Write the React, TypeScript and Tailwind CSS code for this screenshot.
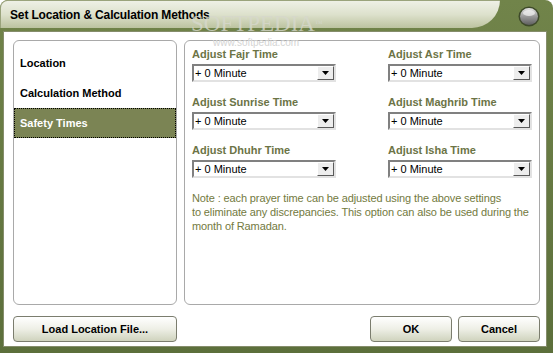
import React from "react";

function Select() {
  return (
    <div className="flex h-[18px] w-[144px] border-2 border-t-[#808080] border-l-[#808080] border-b-[#e2e2e2] border-r-[#e2e2e2] bg-white">
      <span className="flex-1 pl-[1px] text-[11px] leading-[14px] text-black">+ 0 Minute</span>
      <span className="flex w-[17px] items-center justify-center border border-t-white border-l-white border-b-[#5a5a5a] border-r-[#5a5a5a] bg-[#ededed]">
        <svg width="7" height="4" viewBox="0 0 7 4">
          <path d="M0 0h7L3.5 4z" fill="#000" />
        </svg>
      </span>
    </div>
  );
}

function Field({ label }: { label: string }) {
  return (
    <div className="flex flex-col">
      <div className="h-[14px] text-[11px] font-bold leading-[14px] text-[#6c7446]">{label}</div>
      <div className="mt-[3px]">
        <Select />
      </div>
    </div>
  );
}

function Btn({ children, w }: { children: React.ReactNode; w: string }) {
  return (
    <button
      className={`${w} h-[26px] shrink-0 rounded-[4px] border border-[#7b7d6e] bg-gradient-to-b from-white via-[#eeefe6] to-[#cfd3bd] text-[11px] font-bold text-black`}
    >
      {children}
    </button>
  );
}

export default function App() {
  return (
    <div className="relative flex h-[353px] w-[553px] flex-col overflow-hidden rounded-t-[8px] bg-gradient-to-b from-[#71844a] to-[#5c6f3b] font-['Liberation_Sans',Arial,sans-serif]">
      {/* Title bar */}
      <div className="flex h-[31px] shrink-0 items-start">
        <div className="flex h-[28px] w-[500px] items-center rounded-tl-[8px] rounded-br-[30px] border-t border-l border-[#9aa37c] bg-gradient-to-b from-[#eef0e6] via-[#dde1cc] to-[#bcc3a0] pl-[9px]">
          <span className="text-[12px] font-bold tracking-[-0.15px] text-black">Set Location &amp; Calculation Methods</span>
        </div>
        <div className="flex flex-1 items-center pt-[6px] pl-[18px]">
          <svg width="22" height="21" viewBox="0 0 22 21">
            <defs>
              <linearGradient id="g" x1="0" y1="0" x2="0" y2="1">
                <stop offset="0" stopColor="#e6e6e6" />
                <stop offset="0.5" stopColor="#9a9a9a" />
                <stop offset="1" stopColor="#5e5e5e" />
              </linearGradient>
            </defs>
            <ellipse cx="11" cy="10.5" rx="10.5" ry="10" fill="#3e4a2a" />
            <ellipse cx="11" cy="10.5" rx="9" ry="8.5" fill="url(#g)" />
            <ellipse cx="11" cy="7" rx="6" ry="3" fill="#f4f4f4" opacity="0.7" />
          </svg>
        </div>
      </div>

      {/* Content */}
      <div className="ml-[3px] mr-[6px] mb-[6px] flex flex-1 flex-col border border-[#858d6b] bg-white pl-[9px] pr-[6px] pt-[8px] pb-[4px]">
        <div className="flex h-[265px] gap-[7px]">
          {/* Left list */}
          <div className="w-[164px] shrink-0 rounded-[6px] border border-[#a9a9a9] pt-[7px]">
            <div className="flex h-[30px] items-center pl-[6px] text-[11px] font-bold text-black">Location</div>
            <div className="flex h-[30px] items-center pl-[6px] text-[11px] font-bold text-black">Calculation Method</div>
            <div className="flex h-[30px] items-center border border-dotted border-black bg-[#7b8454] pl-[5px] text-[11px] font-bold text-white">
              Safety Times
            </div>
          </div>
          {/* Right panel */}
          <div className="flex min-w-0 flex-1 flex-col rounded-[6px] border border-[#a9a9a9] px-[7px] pt-[6px]">
            <div className="grid grid-cols-[144px_144px] justify-between gap-y-[13px]">
              <Field label="Adjust Fajr Time" />
              <Field label="Adjust Asr Time" />
              <Field label="Adjust Sunrise Time" />
              <Field label="Adjust Maghrib Time" />
              <Field label="Adjust Dhuhr Time" />
              <Field label="Adjust Isha Time" />
            </div>
            <p className="mt-[13px] whitespace-nowrap text-[11px] leading-[14px] tracking-[-0.12px] text-[#737a3e]">
              Note : each prayer time can be adjusted using the above settings
              <br />
              to eliminate any discrepancies. This option can also be used during the
              <br />
              month of Ramadan.
            </p>
          </div>
        </div>
        <div className="mt-[11px] flex items-center">
          <Btn w="w-[164px]">Load Location File...</Btn>
          <div className="flex-1" />
          <div className="flex gap-[6px]">
            <Btn w="w-[82px]">OK</Btn>
            <Btn w="w-[82px]">Cancel</Btn>
          </div>
        </div>
      </div>

      {/* Watermarks */}
      <div className="pointer-events-none absolute left-[191px] top-[12px] font-['Liberation_Serif',serif] text-[23px] leading-[24px] text-[#d6d8cc] opacity-80">
        SOFTPEDIA<span className="align-top text-[8px]">™</span>
      </div>
      <div className="pointer-events-none absolute left-[213px] top-[37px] text-[10px] leading-[11px] text-[#d4d4d4]">www.softpedia.com</div>
    </div>
  );
}
